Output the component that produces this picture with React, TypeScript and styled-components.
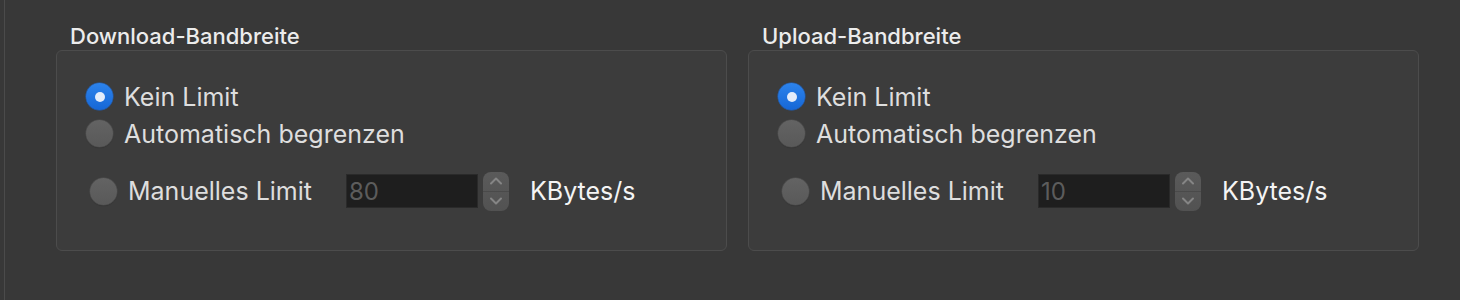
import React from "react";
import styled, { createGlobalStyle } from "styled-components";

const Global = createGlobalStyle`
  html, body { margin: 0; padding: 0; background: #383838; }
  body { font-family: Inter, "Liberation Sans", sans-serif; -webkit-font-smoothing: antialiased; }
`;

const Page = styled.div`
  height: 300px;
  padding-left: 4px;
  box-sizing: border-box;
`;

const Pane = styled.div`
  height: 100%;
  border-left: 1px solid #4b4b4b;
  padding: 21px 0 0 51px;
  box-sizing: border-box;
  display: flex;
  gap: 21px;
`;

const Group = styled.section`
  width: 671px;
  display: flex;
  flex-direction: column;
`;

const Title = styled.div`
  height: 29px;
  padding-left: 14px;
  font-size: 22px;
  font-weight: 500;
  line-height: 30px;
  color: #ececec;
`;

const Box = styled.div`
  height: 201px;
  box-sizing: border-box;
  border: 1px solid #4c4c4c;
  border-radius: 6px;
  background: #3c3c3c;
  padding: 27px 0 0 29px;
  display: flex;
  flex-direction: column;
`;

const Row = styled.div<{ $indent?: number; $top?: number }>`
  height: ${(p) => (p.$top ? 40 : 37)}px;
  margin-top: ${(p) => p.$top ?? 0}px;
  padding-left: ${(p) => p.$indent ?? 0}px;
  display: flex;
  align-items: center;
`;

const Radio = styled.span<{ $on?: boolean }>`
  width: 27px;
  height: 27px;
  border-radius: 50%;
  box-sizing: border-box;
  flex: none;
  display: flex;
  align-items: center;
  justify-content: center;
  background: ${(p) =>
    p.$on
      ? "linear-gradient(#2c83ec, #1667d6)"
      : "linear-gradient(#636363, #595959)"};
  box-shadow: ${(p) =>
    p.$on ? "0 0 0 0.5px #1a5fc0" : "0 0 0 0.5px #505050, 0 1px 1px rgba(0,0,0,0.25)"};
  &::after {
    content: "";
    display: ${(p) => (p.$on ? "block" : "none")};
    width: 10px;
    height: 10px;
    border-radius: 50%;
    background: #e3ecfa;
  }
`;

const Label = styled.span<{ $width?: number }>`
  margin-left: 11px;
  font-size: 25px;
  color: #dedede;
  white-space: nowrap;
  width: ${(p) => (p.$width ? `${p.$width}px` : "auto")};
  flex: none;
`;

const NumberField = styled.div`
  width: 132px;
  height: 34px;
  box-sizing: border-box;
  background: #1e1e1e;
  border: 1px solid #2a2a2a;
  font-size: 24px;
  color: #5c5c5c;
  padding-left: 2px;
  display: flex;
  align-items: center;
  flex: none;
`;

const Stepper = styled.div`
  margin-left: 5px;
  width: 26px;
  height: 39px;
  border-radius: 8px;
  background: linear-gradient(#5a5a5a, #525252);
  display: flex;
  flex-direction: column;
  overflow: hidden;
  flex: none;
`;

const StepHalf = styled.div<{ $top?: boolean }>`
  flex: 1;
  display: flex;
  align-items: center;
  justify-content: center;
  border-bottom: ${(p) => (p.$top ? "1px solid #4a4a4a" : "none")};
`;

const Unit = styled.span`
  margin-left: 21px;
  font-size: 25px;
  color: #f4f4f4;
  white-space: nowrap;
`;

const Chevron = ({ up }: { up?: boolean }) => (
  <svg width="14" height="10" viewBox="0 0 14 10">
    <path
      d={up ? "M2 7.5 L7 2.5 L12 7.5" : "M2 2.5 L7 7.5 L12 2.5"}
      fill="none"
      stroke="#858585"
      strokeWidth="2"
      strokeLinecap="round"
      strokeLinejoin="round"
    />
  </svg>
);

const Bandwidth = ({ title, value }: { title: string; value: string }) => (
  <Group>
    <Title>{title}</Title>
    <Box>
      <Row>
        <Radio $on />
        <Label>Kein Limit</Label>
      </Row>
      <Row>
        <Radio />
        <Label>Automatisch begrenzen</Label>
      </Row>
      <Row $indent={4} $top={19}>
        <Radio />
        <Label $width={218}>Manuelles Limit</Label>
        <NumberField>{value}</NumberField>
        <Stepper>
          <StepHalf $top>
            <Chevron up />
          </StepHalf>
          <StepHalf>
            <Chevron />
          </StepHalf>
        </Stepper>
        <Unit>KBytes/s</Unit>
      </Row>
    </Box>
  </Group>
);

export default function App() {
  return (
    <>
      <Global />
      <Page>
        <Pane>
          <Bandwidth title="Download-Bandbreite" value="80" />
          <Bandwidth title="Upload-Bandbreite" value="10" />
        </Pane>
      </Page>
    </>
  );
}
